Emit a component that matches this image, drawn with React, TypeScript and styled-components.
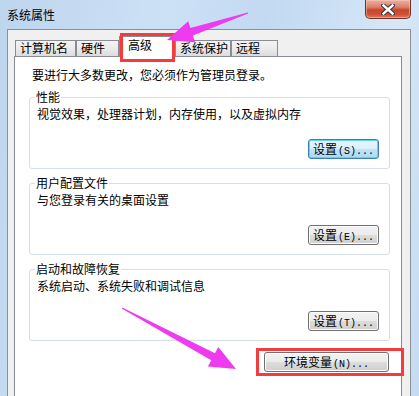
import styled, { createGlobalStyle } from "styled-components";

const GlobalStyle = createGlobalStyle`
  html, body {
    margin: 0;
    padding: 0;
  }

  body {
    font-family: "Noto Sans CJK SC", "Noto Sans", sans-serif;
    font-size: 12px;
    color: #000;
    background: #c8ddf3;
  }
`;

const Window = styled.div`
  position: relative;
  width: 419px;
  height: 396px;
  overflow: hidden;
  box-sizing: border-box;
  padding: 0 8px 0 7px;
  display: flex;
  flex-direction: column;
  background: linear-gradient(
    100deg,
    #bed5ee 0%,
    #cde1f6 35%,
    #c2d9f1 55%,
    #d6e7f8 82%,
    #c5dbf2 100%
  );
`;

const TitleBar = styled.div`
  flex: none;
  height: 29px;
  display: flex;
  justify-content: space-between;
  align-items: flex-start;
`;

const Title = styled.div`
  margin-top: 7px;
  line-height: 16px;
  color: #000;
`;

const CloseButton = styled.button`
  width: 46px;
  height: 19px;
  margin: 0;
  padding: 0;
  box-sizing: border-box;
  display: flex;
  align-items: center;
  justify-content: center;
  border: 1px solid #6f3227;
  border-top: none;
  border-radius: 0 0 5px 5px;
  background: linear-gradient(
    180deg,
    #e9b1a2 0%,
    #dc7f68 40%,
    #c8452e 55%,
    #cf5238 80%,
    #e07b5f 100%
  );
  box-shadow: inset 0 0 0 1px rgba(255, 210, 195, 0.45);
`;

const Body = styled.div`
  flex: none;
  height: 420px;
  box-sizing: border-box;
  display: flex;
  flex-direction: column;
  padding: 6px 8px 0 6px;
  background: #f0f0f0;
  border: 1px solid #8b8f96;
`;

const TabRow = styled.div`
  display: flex;
  align-items: flex-end;
  height: 20px;
  padding-left: 1px;
`;

const Tab = styled.div<{ $active?: boolean; $width: number }>`
  position: relative;
  z-index: ${({ $active }) => ($active ? 2 : 1)};
  box-sizing: border-box;
  width: ${({ $width }) => $width}px;
  height: ${({ $active }) => ($active ? 21 : 16)}px;
  margin-bottom: ${({ $active }) => ($active ? -1 : 0)}px;
  padding: ${({ $active }) => ($active ? "1px 0 0 8px" : "0 0 0 4px")};
  line-height: 14px;
  border: 1px solid #898c95;
  border-bottom: none;
  background: ${({ $active }) =>
    $active
      ? "#ffffff"
      : "linear-gradient(180deg, #f3f3f3 0%, #ebebeb 50%, #dcdcdc 100%)"};
  white-space: nowrap;
`;

const Panel = styled.div`
  flex: 1;
  display: flex;
  flex-direction: column;
  padding: 10px 11px 0 14px;
  background: #ffffff;
  border: 1px solid #898c95;
`;

const Intro = styled.div`
  margin: 0 0 6px 3px;
  line-height: 16px;
`;

const Groups = styled.div`
  display: flex;
  flex-direction: column;
  gap: 6px;
`;

const Group = styled.fieldset`
  margin: 0;
  min-width: 0;
  padding: 1px 10px 9px 7px;
  border: 1px solid #d5dfe5;
  border-radius: 3px;
`;

const Legend = styled.legend`
  margin-left: -2px;
  padding: 0 1px;
  line-height: 16px;
`;

const Description = styled.div`
  line-height: 16px;
`;

const ButtonRow = styled.div<{ $gap: number; $inset?: number }>`
  display: flex;
  justify-content: flex-end;
  margin-top: ${({ $gap }) => $gap}px;
  padding-right: ${({ $inset }) => $inset ?? 0}px;
`;

const Button = styled.button<{ $width: number; $default?: boolean }>`
  width: ${({ $width }) => $width}px;
  height: 20px;
  margin: 0;
  padding: 0;
  box-sizing: border-box;
  font-family: "Noto Sans CJK SC", "Noto Sans", sans-serif;
  font-size: 12px;
  line-height: 18px;
  color: #000;
  white-space: nowrap;
  border-radius: 3px;
  border: 1px solid ${({ $default }) => ($default ? "#3c7fb1" : "#707070")};
  background: ${({ $default }) =>
    $default
      ? "linear-gradient(180deg, #eaf6fd 0%, #d9f0fc 49%, #bee6fd 50%, #a7d9f5 100%)"
      : "linear-gradient(180deg, #f2f2f2 0%, #ebebeb 49%, #dddddd 50%, #cfcfcf 100%)"};
  box-shadow: inset 0 0 0 1px
    ${({ $default }) => ($default ? "#5fd3ff" : "#fcfcfc")};
`;

const Mnemonic = styled.span`
  font-family: "Liberation Mono", monospace;
  font-size: 10px;
  margin-left: 1px;
`;

const Overlay = styled.svg`
  position: absolute;
  left: 0;
  top: 0;
  z-index: 10;
  pointer-events: none;
`;

type Point = [number, number];

// tapered annotation arrow, from tail to tip
const arrowPoints = (tail: Point, tip: Point) => {
  const dx = tip[0] - tail[0];
  const dy = tip[1] - tail[1];
  const len = Math.hypot(dx, dy);
  const ux = dx / len;
  const uy = dy / len;
  const nx = -uy;
  const ny = ux;
  const headLen = 26;
  const headHalf = 11;
  const neck = 4;
  const tailHalf = 0.6;
  const bx = tip[0] - ux * headLen;
  const by = tip[1] - uy * headLen;
  const pts: Point[] = [
    [tail[0] + nx * tailHalf, tail[1] + ny * tailHalf],
    [bx + nx * neck, by + ny * neck],
    [bx + nx * headHalf, by + ny * headHalf],
    tip,
    [bx - nx * headHalf, by - ny * headHalf],
    [bx - nx * neck, by - ny * neck],
    [tail[0] - nx * tailHalf, tail[1] - ny * tailHalf],
  ];
  return pts.map((p) => p.map((v) => v.toFixed(1)).join(",")).join(" ");
};

const tabs = [
  { id: 1, name: "计算机名", width: 61 },
  { id: 2, name: "硬件", width: 43 },
  { id: 3, name: "高级", width: 56, active: true },
  { id: 4, name: "系统保护", width: 56 },
  { id: 5, name: "远程", width: 47 },
];

const groups = [
  {
    id: 1,
    title: "性能",
    text: "视觉效果，处理器计划，内存使用，以及虚拟内存",
    key: "S",
    isDefault: true,
  },
  { id: 2, title: "用户配置文件", text: "与您登录有关的桌面设置", key: "E" },
  {
    id: 3,
    title: "启动和故障恢复",
    text: "系统启动、系统失败和调试信息",
    key: "T",
  },
];

export default function App() {
  return (
    <>
      <GlobalStyle />
      <Window>
        <TitleBar>
          <Title>系统属性</Title>
          <CloseButton aria-label="关闭">
            <svg width="14" height="11" viewBox="0 0 14 11">
              <path
                d="M2.5 1.5 L11.5 9.5 M11.5 1.5 L2.5 9.5"
                stroke="#3b3b3b"
                strokeWidth="4.6"
                strokeLinecap="square"
              />
              <path
                d="M2.5 1.5 L11.5 9.5 M11.5 1.5 L2.5 9.5"
                stroke="#ffffff"
                strokeWidth="2.4"
                strokeLinecap="square"
              />
            </svg>
          </CloseButton>
        </TitleBar>

        <Body>
          <TabRow>
            {tabs.map((tab) => (
              <Tab key={tab.id} $active={tab.active} $width={tab.width}>
                {tab.name}
              </Tab>
            ))}
          </TabRow>

          <Panel>
            <Intro>要进行大多数更改，您必须作为管理员登录。</Intro>
            <Groups>
              {groups.map((group) => (
                <Group key={group.id}>
                  <Legend>{group.title}</Legend>
                  <Description>{group.text}</Description>
                  <ButtonRow $gap={17}>
                    <Button $width={71} $default={group.isDefault}>
                      设置<Mnemonic>({group.key})...</Mnemonic>
                    </Button>
                  </ButtonRow>
                </Group>
              ))}
            </Groups>
            <ButtonRow $gap={11} $inset={1}>
              <Button $width={125}>
                环境变量<Mnemonic>(N)...</Mnemonic>
              </Button>
            </ButtonRow>
          </Panel>
        </Body>

        <Overlay width="419" height="396" viewBox="0 0 419 396">
          <rect
            x="121.5"
            y="34.5"
            width="52"
            height="26"
            fill="none"
            stroke="#f43c3c"
            strokeWidth="3"
          />
          <rect
            x="257.5"
            y="349.5"
            width="145"
            height="25"
            fill="none"
            stroke="#f43c3c"
            strokeWidth="3"
          />
          <polygon points={arrowPoints([248, 13], [167, 40])} fill="#ef3bef" />
          <polygon points={arrowPoints([122, 308], [236, 369])} fill="#ef3bef" />
        </Overlay>
      </Window>
    </>
  );
}
